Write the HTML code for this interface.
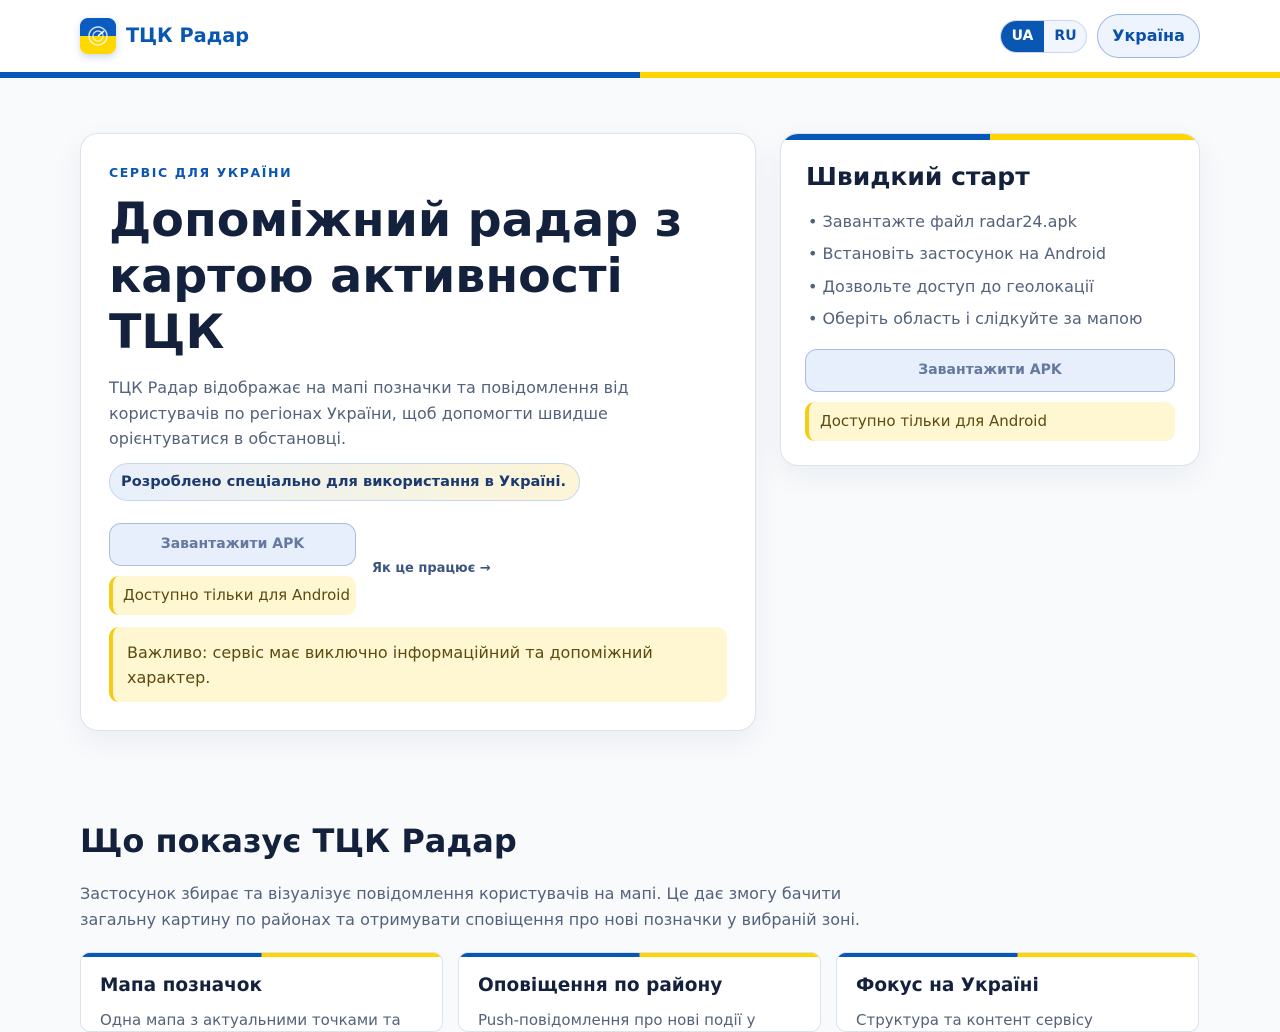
<!DOCTYPE html>
<html><head><meta charset="utf-8"><style>
*{box-sizing:border-box;margin:0;padding:0}
body{width:1280px;height:1024px;overflow:hidden;background:#f8fafc;font-family:"DejaVu Sans","Liberation Sans",sans-serif;color:#1e293b;position:relative}
.a{position:absolute}
header{position:absolute;left:0;top:0;width:1280px;height:72px;background:#fff}
.stripe{position:absolute;left:0;top:72px;width:1280px;height:6px;background:linear-gradient(90deg,#0757b8 50%,#ffd500 50%)}
.logo{left:80px;top:18px;width:36px;height:36px;border-radius:8px;background:linear-gradient(#0b5cc0 50%,#ffd800 50%);box-shadow:0 3px 8px rgba(0,60,150,.2)}
.brand{left:126px;top:24px;font-size:19.3px;font-weight:bold;color:#0a56b3}
.lang{left:1000px;top:20px;width:87px;height:33px;border:1px solid #c8d6ee;border-radius:17px;overflow:hidden;background:#f1f5fd;font-size:14px;font-weight:bold}
.lang span{position:absolute;top:0;height:31px;line-height:31px;text-align:center}
.country{left:1097px;top:14px;width:103px;height:44px;border:1px solid #9bb6e3;border-radius:22px;background:#eef4fd;color:#0a4fa8;font-weight:bold;font-size:16px;text-align:center;line-height:42px}
.card{background:#fff;border:1px solid #dbe3ee;border-radius:18px;box-shadow:0 10px 30px rgba(15,40,90,.06)}
.btn{border:1px solid #a9bde0;background:#e7effc;border-radius:12px;color:#6478a0;font-weight:bold;font-size:14px;text-align:center}
.note{background:#fff6d2;border-left:4px solid #f5cc14;border-radius:10px;color:#5c4a10;font-size:15px}
.feat{top:952px;width:363px;height:80px;background:#fff;border:1px solid #dbe3ee;border-radius:10px;overflow:hidden}
.feat:before{content:"";position:absolute;left:0;top:0;right:0;height:4px;background:linear-gradient(90deg,#0757b8 50%,#ffd500 50%)}
.feat h3{position:absolute;left:19px;top:22px;font-size:18.5px;color:#14213d}
.feat p{position:absolute;left:19px;top:58px;font-size:15px;color:#53627a;white-space:nowrap}
</style></head><body>
<header>
<div class="a logo"><svg width="36" height="36"><circle cx="18" cy="18" r="9" fill="none" stroke="#fff" stroke-width="1.5" opacity=".8"/><circle cx="18" cy="18" r="5" fill="none" stroke="#fff" stroke-width="1.2" opacity=".8"/><path d="M18 18 L24 13" stroke="#fff" stroke-width="1.5"/></svg></div>
<div class="a brand">ТЦК Радар</div>
<div class="a lang"><span style="left:0;width:43px;background:#0a56b3;color:#fff">UA</span><span style="left:43px;width:43px;color:#0a4fa8">RU</span></div>
<div class="a country">Україна</div>
</header>
<div class="stripe"></div>

<div class="a card" style="left:80px;top:133px;width:676px;height:598px"></div>
<div class="a" style="left:109px;top:165px;font-size:12.5px;font-weight:bold;letter-spacing:1.6px;color:#0a56b3">СЕРВІС ДЛЯ УКРАЇНИ</div>
<div class="a" style="left:109px;top:193px;width:640px;font-size:47.5px;line-height:56px;font-weight:bold;color:#14213d">Допоміжний радар з картою активності ТЦК</div>
<div class="a" style="left:109px;top:375px;width:560px;font-size:16px;line-height:25.5px;color:#53627a">ТЦК Радар відображає на мапі позначки та повідомлення від користувачів по регіонах України, щоб допомогти швидше орієнтуватися в обстановці.</div>
<div class="a" style="left:109px;top:463px;width:471px;height:38px;border:1px solid #c8d6ee;border-radius:19px;background:linear-gradient(90deg,#e8f0fc,#fdf5d6);font-size:14.6px;font-weight:bold;color:#1c3a6e;line-height:36px;padding-left:11px;white-space:nowrap">Розроблено спеціально для використання в Україні.</div>
<div class="a btn" style="left:109px;top:523px;width:247px;height:43px;line-height:41px">Завантажити APK</div>
<div class="a note" style="left:109px;top:576px;width:247px;height:39px;line-height:39px;padding-left:10px">Доступно тільки для Android</div>
<div class="a" style="left:372px;top:561px;font-size:13px;font-weight:bold;color:#3c5580">Як це працює →</div>
<div class="a note" style="left:109px;top:627px;width:618px;height:75px;padding:13px 0 0 14px;font-size:16px;line-height:25px">Важливо: сервіс має виключно інформаційний та допоміжний характер.</div>

<div class="a card" style="left:780px;top:133px;width:420px;height:333px;overflow:hidden"><div style="height:6px;background:linear-gradient(90deg,#0757b8 50%,#ffd500 50%)"></div></div>
<div class="a" style="left:806px;top:162px;font-size:25px;font-weight:bold;color:#14213d">Швидкий старт</div>
<div class="a" style="left:808px;top:206px;font-size:16px;line-height:32.3px;color:#53627a">• Завантажте файл radar24.apk<br>• Встановіть застосунок на Android<br>• Дозвольте доступ до геолокації<br>• Оберіть область і слідкуйте за мапою</div>
<div class="a btn" style="left:805px;top:349px;width:370px;height:43px;line-height:41px">Завантажити APK</div>
<div class="a note" style="left:805px;top:402px;width:370px;height:39px;line-height:39px;padding-left:11px">Доступно тільки для Android</div>

<div class="a" style="left:80px;top:822px;font-size:32px;font-weight:bold;color:#14213d">Що показує ТЦК Радар</div>
<div class="a" style="left:80px;top:881px;width:800px;font-size:16px;line-height:26px;color:#53627a">Застосунок збирає та візуалізує повідомлення користувачів на мапі. Це дає змогу бачити загальну картину по районах та отримувати сповіщення про нові позначки у вибраній зоні.</div>
<div class="a feat" style="left:80px"><h3>Мапа позначок</h3><p>Одна мапа з актуальними точками та</p></div>
<div class="a feat" style="left:458px"><h3>Оповіщення по району</h3><p>Push-повідомлення про нові події у</p></div>
<div class="a feat" style="left:836px"><h3>Фокус на Україні</h3><p>Структура та контент сервісу</p></div>
</body></html>
